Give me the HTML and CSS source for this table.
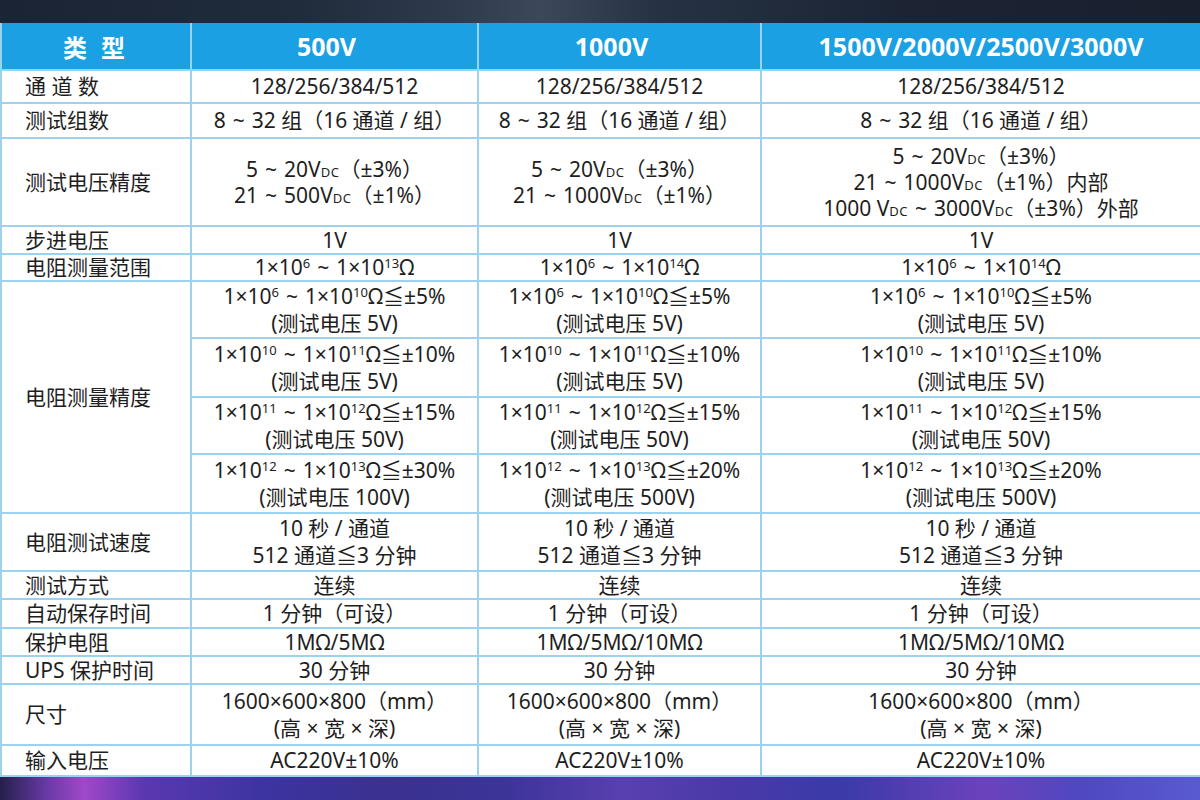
FILE: index.html
```html
<!DOCTYPE html>
<html lang="zh-CN">
<head>
<meta charset="utf-8">
<title>规格参数</title>
<link rel="stylesheet" href="styles.css">
</head>
<body>
<div class="page">
  <div class="band-top"></div>
  <div class="spec">
    <div class="hd">类 型</div>
    <div class="hd hd-left">500V</div>
    <div class="hd hd-left">1000V</div>
    <div class="hd">1500V/2000V/2500V/3000V</div>

    <div class="lb">通 道 数</div>
    <div class="vc">128/256/384/512</div>
    <div class="vc">128/256/384/512</div>
    <div class="vc">128/256/384/512</div>

    <div class="lb">测试组数</div>
    <div class="vc"><span>8<i class="tl">~</i>32 组（16 通道 / 组）</span></div>
    <div class="vc"><span>8<i class="tl">~</i>32 组（16 通道 / 组）</span></div>
    <div class="vc"><span>8<i class="tl">~</i>32 组（16 通道 / 组）</span></div>

    <div class="lb">测试电压精度</div>
    <div class="vc tight"><span>5<i class="tl">~</i>20V<small class="dc">DC</small>（±3%）</span><span>21<i class="tl">~</i>500V<small class="dc">DC</small>（±1%）</span></div>
    <div class="vc tight"><span>5<i class="tl">~</i>20V<small class="dc">DC</small>（±3%）</span><span>21<i class="tl">~</i>1000V<small class="dc">DC</small>（±1%）</span></div>
    <div class="vc tight"><span>5<i class="tl">~</i>20V<small class="dc">DC</small>（±3%）</span><span>21<i class="tl">~</i>1000V<small class="dc">DC</small>（±1%）内部</span><span>1000 V<small class="dc">DC</small><i class="tl">~</i>3000V<small class="dc">DC</small>（±3%）外部</span></div>

    <div class="lb">步进电压</div>
    <div class="vc">1V</div>
    <div class="vc">1V</div>
    <div class="vc">1V</div>

    <div class="lb">电阻测量范围</div>
    <div class="vc"><span>1×10<sup>6</sup><i class="tl">~</i>1×10<sup>13</sup>Ω</span></div>
    <div class="vc"><span>1×10<sup>6</sup><i class="tl">~</i>1×10<sup>14</sup>Ω</span></div>
    <div class="vc"><span>1×10<sup>6</sup><i class="tl">~</i>1×10<sup>14</sup>Ω</span></div>

    <div class="lb span4">电阻测量精度</div>
    <div class="vc"><span>1×10<sup>6</sup><i class="tl">~</i>1×10<sup>10</sup>Ω≦±5%</span><span>(测试电压 5V)</span></div>
    <div class="vc"><span>1×10<sup>6</sup><i class="tl">~</i>1×10<sup>10</sup>Ω≦±5%</span><span>(测试电压 5V)</span></div>
    <div class="vc"><span>1×10<sup>6</sup><i class="tl">~</i>1×10<sup>10</sup>Ω≦±5%</span><span>(测试电压 5V)</span></div>

    <div class="vc"><span>1×10<sup>10</sup><i class="tl">~</i>1×10<sup>11</sup>Ω≦±10%</span><span>(测试电压 5V)</span></div>
    <div class="vc"><span>1×10<sup>10</sup><i class="tl">~</i>1×10<sup>11</sup>Ω≦±10%</span><span>(测试电压 5V)</span></div>
    <div class="vc"><span>1×10<sup>10</sup><i class="tl">~</i>1×10<sup>11</sup>Ω≦±10%</span><span>(测试电压 5V)</span></div>

    <div class="vc"><span>1×10<sup>11</sup><i class="tl">~</i>1×10<sup>12</sup>Ω≦±15%</span><span>(测试电压 50V)</span></div>
    <div class="vc"><span>1×10<sup>11</sup><i class="tl">~</i>1×10<sup>12</sup>Ω≦±15%</span><span>(测试电压 50V)</span></div>
    <div class="vc"><span>1×10<sup>11</sup><i class="tl">~</i>1×10<sup>12</sup>Ω≦±15%</span><span>(测试电压 50V)</span></div>

    <div class="vc"><span>1×10<sup>12</sup><i class="tl">~</i>1×10<sup>13</sup>Ω≦±30%</span><span>(测试电压 100V)</span></div>
    <div class="vc"><span>1×10<sup>12</sup><i class="tl">~</i>1×10<sup>13</sup>Ω≦±20%</span><span>(测试电压 500V)</span></div>
    <div class="vc"><span>1×10<sup>12</sup><i class="tl">~</i>1×10<sup>13</sup>Ω≦±20%</span><span>(测试电压 500V)</span></div>

    <div class="lb">电阻测试速度</div>
    <div class="vc"><span>10 秒 / 通道</span><span>512 通道≦3 分钟</span></div>
    <div class="vc"><span>10 秒 / 通道</span><span>512 通道≦3 分钟</span></div>
    <div class="vc"><span>10 秒 / 通道</span><span>512 通道≦3 分钟</span></div>

    <div class="lb">测试方式</div>
    <div class="vc">连续</div>
    <div class="vc">连续</div>
    <div class="vc">连续</div>

    <div class="lb">自动保存时间</div>
    <div class="vc">1 分钟（可设）</div>
    <div class="vc">1 分钟（可设）</div>
    <div class="vc">1 分钟（可设）</div>

    <div class="lb">保护电阻</div>
    <div class="vc">1MΩ/5MΩ</div>
    <div class="vc">1MΩ/5MΩ/10MΩ</div>
    <div class="vc">1MΩ/5MΩ/10MΩ</div>

    <div class="lb">UPS 保护时间</div>
    <div class="vc">30 分钟</div>
    <div class="vc">30 分钟</div>
    <div class="vc">30 分钟</div>

    <div class="lb">尺寸</div>
    <div class="vc"><span>1600×600×800（mm）</span><span>(高 × 宽 × 深)</span></div>
    <div class="vc"><span>1600×600×800（mm）</span><span>(高 × 宽 × 深)</span></div>
    <div class="vc"><span>1600×600×800（mm）</span><span>(高 × 宽 × 深)</span></div>

    <div class="lb">输入电压</div>
    <div class="vc">AC220V±10%</div>
    <div class="vc">AC220V±10%</div>
    <div class="vc">AC220V±10%</div>
  </div>
  <div class="band-bottom"></div>
</div>
</body>
</html>
```

FILE: styles.css
```css
html, body {
  margin: 0;
  padding: 0;
}
body {
  width: 1200px;
  height: 800px;
  overflow: hidden;
  font-family: "Noto Sans", "Noto Sans CJK SC", sans-serif;
  color: #1e1e1e;
}
.page {
  display: flex;
  flex-direction: column;
  height: 800px;
}
.band-top {
  height: 23px;
  flex: none;
  background: linear-gradient(90deg, #1b2434 0%, #202b3c 25%, #2f3b4d 38%, #3c475a 45%, #263244 55%, #1c2434 75%, #181f2d 100%);
}
.spec {
  flex: none;
  display: grid;
  grid-template-columns: 188px 285px 281px 438px;
  grid-template-rows: 46px 31px 33px 86px 26px 25px 55px 57px 55px 57px 56px 26px 27px 26px 26px 59px 29px;
  gap: 2px;
  padding: 0 0 2px 2px;
  background: #9ad2f0;
}
.hd {
  background: #1ba0e3;
  color: #fff;
  font-weight: 700;
  font-size: 25px;
  display: flex;
  align-items: center;
  justify-content: center;
}
.hd:first-child {
  font-size: 24px;
  letter-spacing: 4px;
}
.hd-left {
  padding-right: 16px;
}
.lb, .vc {
  background: #fff;
  font-size: 21px;
  line-height: 27px;
  display: flex;
  flex-direction: column;
  justify-content: center;
}
.lb {
  align-items: flex-start;
  padding-left: 23px;
}
.vc {
  align-items: center;
  text-align: center;
}
.tight {
  line-height: 26px;
}
.span4 {
  grid-row: span 4;
}
sup {
  font-size: 13px;
  line-height: 0;
  vertical-align: 7px;
}
.dc {
  font-size: 13px;
  line-height: 1;
  letter-spacing: 0.5px;
}
.tl {
  font-style: normal;
  margin: 0 7px;
}
.band-bottom {
  flex: 1;
  background:
    linear-gradient(90deg, #24204a 0%, #6a3aa8 4%, #a048c8 7%, #5a38b0 12%, #3c34a0 22%, #3a3190 32%, #3b3598 42%, #5a3fb0 52%, #4a3aa8 60%, #3a3aa8 70%, #6c42bc 82%, #4f48c0 90%, #5a5ad0 100%);
}
```
